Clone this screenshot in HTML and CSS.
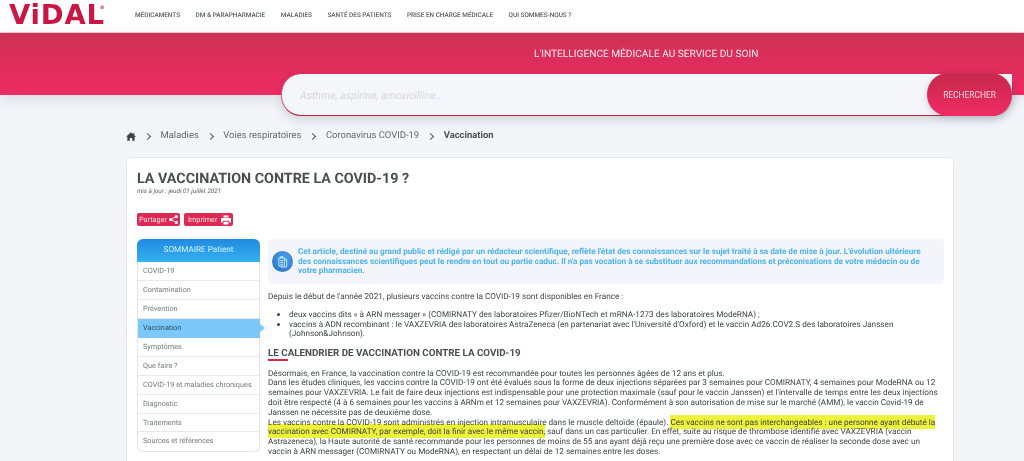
FILE: index.html
```html
<!DOCTYPE html>
<html lang="fr">
<head>
    <meta charset="UTF-8">
    <meta name="viewport" content="width=device-width, initial-scale=1.0">
    <title>La vaccination contre la COVID-19 ?</title>
    <link rel="stylesheet" href="styles.css">
</head>
<body>
    <header class="topbar">
        <a class="logo" href="#">ViDAL<sup>®</sup></a>
        <nav class="mainnav">
            <a href="#">MÉDICAMENTS</a>
            <a href="#">DM &amp; PARAPHARMACIE</a>
            <a href="#">MALADIES</a>
            <a href="#">SANTÉ DES PATIENTS</a>
            <a href="#">PRISE EN CHARGE MÉDICALE</a>
            <a href="#">QUI SOMMES-NOUS ?</a>
        </nav>
    </header>

    <section class="hero">
        <p class="tagline">L'INTELLIGENCE MÉDICALE AU SERVICE DU SOIN</p>
    </section>

    <form class="search">
        <span class="search-input">Asthme, aspirine, amoxicilline...</span>
        <button class="search-btn" type="button">RECHERCHER</button>
    </form>

    <nav class="crumbs">
        <svg class="home" viewBox="0 0 12 10" width="10" height="9"><path d="M6 0 0 5.200h1.600V10h3V6.800h2.800V10h3V5.200H12L10 3.500V.8H8.600v1.500z" fill="#3f4347"/></svg>
        <i class="sep"></i><a href="#">Maladies</a>
        <i class="sep"></i><a href="#">Voies respiratoires</a>
        <i class="sep"></i><a href="#">Coronavirus COVID-19</a>
        <i class="sep"></i><b>Vaccination</b>
    </nav>

    <main class="card">
        <h1>LA VACCINATION CONTRE LA COVID-19 ?</h1>
        <p class="updated">mis à jour : jeudi 01 juillet 2021</p>

        <div class="actions">
            <a class="action" href="#">Partager
                <svg viewBox="0 0 10 10" width="9" height="9"><circle cx="1.800" cy="5" r="1.700" fill="#fff"/><circle cx="8.200" cy="1.800" r="1.700" fill="#fff"/><circle cx="8.200" cy="8.200" r="1.700" fill="#fff"/><path d="M8.200 1.800 1.800 5l6.400 3.200" fill="none" stroke="#fff" stroke-width=".9"/></svg>
            </a>
            <a class="action print" href="#">Imprimer
                <svg viewBox="0 0 12 11" width="10" height="10"><path d="M3 0h6v2.500H3zM1 3h10a1 1 0 0 1 1 1v4.500H10V6.500H2v2H0V4a1 1 0 0 1 1-1zM3 7.500h6V11H3z" fill="#fff"/></svg>
            </a>
        </div>

        <div class="columns">
            <aside class="summary">
                <div class="summary-title">SOMMAIRE Patient</div>
                <ul>
                    <li>COVID-19</li>
                    <li>Contamination</li>
                    <li>Prévention</li>
                    <li class="active">Vaccination</li>
                    <li>Symptômes</li>
                    <li>Que faire ?</li>
                    <li>COVID-19 et maladies chroniques</li>
                    <li>Diagnostic</li>
                    <li>Traitements</li>
                    <li>Sources et références</li>
                </ul>
            </aside>

            <article class="content">
                <div class="notice">
                    <span class="notice-icon">
                        <svg viewBox="0 0 12 14" width="11" height="13" fill="none" stroke="#dcefff" stroke-width=".9"><path d="M2 3h6v9H2zM4 1.500h2V3H4zM8 5h2.500v8H4.500v-1M3.500 6h3M3.500 8h3M3.500 10h3"/></svg>
                    </span>
                    <p>Cet article, destiné au grand public et rédigé par un rédacteur scientifique, reflète l'état des connaissances sur le sujet traité à sa date de mise à jour. L'évolution ultérieure des connaissances scientifiques peut le rendre en tout ou partie caduc. Il n'a pas vocation à se substituer aux recommandations et préconisations de votre médecin ou de votre pharmacien.</p>
                </div>

                <p>Depuis le début de l'année 2021, plusieurs vaccins contre la COVID-19 sont disponibles en France :</p>
                <ul class="bullets">
                    <li>deux vaccins dits « à ARN messager » (COMIRNATY des laboratoires Pfizer/BioNTech et mRNA-1273 des laboratoires ModeRNA) ;</li>
                    <li>vaccins à ADN recombinant : le VAXZEVRIA des laboratoires AstraZeneca (en partenariat avec l'Université d'Oxford) et le vaccin Ad26.COV2.S des laboratoires Janssen (Johnson&amp;Johnson).</li>
                </ul>

                <h2>LE CALENDRIER DE VACCINATION CONTRE LA COVID-19</h2>

                <p>Désormais, en France, la vaccination contre la COVID-19 est recommandée pour toutes les personnes âgées de 12 ans et plus.<br>
                Dans les études cliniques, les vaccins contre la COVID-19 ont été évalués sous la forme de deux injections séparées par 3 semaines pour COMIRNATY, 4 semaines pour ModeRNA ou 12 semaines pour VAXZEVRIA. Le fait de faire deux injections est indispensable pour une protection maximale (sauf pour le vaccin Janssen) et l'intervalle de temps entre les deux injections doit être respecté (4 à 6 semaines pour les vaccins à ARNm et 12 semaines pour VAXZEVRIA). Conformément à son autorisation de mise sur le marché (AMM), le vaccin Covid-19 de Janssen ne nécessite pas de deuxième dose.<br>
                Les vaccins contre la COVID-19 sont administrés en injection intramusculaire dans le muscle deltoïde (épaule). <mark>Ces vaccins ne sont pas interchangeables : une personne ayant débuté la vaccination avec COMIRNATY, par exemple, doit la finir avec le même vaccin,</mark> sauf dans un cas particulier. En effet, suite au risque de thrombose identifié avec VAXZEVRIA (vaccin Astrazeneca), la Haute autorité de santé recommande pour les personnes de moins de 55 ans ayant déjà reçu une première dose avec ce vaccin de réaliser la seconde dose avec un vaccin à ARN messager (COMIRNATY ou ModeRNA), en respectant un délai de 12 semaines entre les doses.</p>
            </article>
        </div>
    </main>
</body>
</html>
```

FILE: styles.css
```css
* {
    box-sizing: border-box;
}

html, body {
    height: 461px;
    overflow: hidden;
}

body {
    margin: 0;
    font-family: Roboto, "Liberation Sans", sans-serif;
    font-size: 8.180px;
    line-height: 9.800px;
    text-rendering: geometricPrecision;
    color: #3c3f43;
    background: #f3f5f9;
}

a {
    color: inherit;
    text-decoration: none;
}

p {
    margin: 0;
}

/* top bar */
.topbar {
    display: flex;
    height: 33px;
    background: #fff;
    border-bottom: 1px solid #eccdd6;
}

.logo {
    width: 135px;
    padding: 4px 0 0 9px;
    font-family: "DejaVu Sans", sans-serif;
    font-size: 27.500px;
    line-height: 22px;
    font-weight: bold;
    letter-spacing: .800px;
    color: #cb1543;
}

.logo sup {
    margin-left: -5px;
    font-size: 5px;
    line-height: 6px;
    vertical-align: 15px;
    letter-spacing: 0;
}

.mainnav {
    display: flex;
    gap: 15.500px;
    padding-top: 11px;
    font-size: 6.420px;
    line-height: 8px;
    font-weight: 500;
    color: #55595d;
}

/* hero and search */
.hero {
    height: 62px;
    padding: 16px 0 0 534px;
    background: linear-gradient(to bottom, #cf3155, #ee2a62);
    box-shadow: 0 4px 14px rgba(60, 70, 90, .14);
}

.tagline {
    font-size: 10.150px;
    line-height: 11px;
    color: #fdeaf0;
}

.search {
    display: flex;
    align-items: stretch;
    justify-content: space-between;
    width: 731px;
    height: 42px;
    margin: -21px 0 0 281px;
    position: relative;
    background: #f4f6fa;
    border-bottom: 1px solid #c4203f;
    border-left: 1px solid #d2566f;
    border-radius: 20px 0 20px 20px;
    box-shadow: 0 5px 10px rgba(60, 70, 90, .16);
}

.search-input {
    padding: 16px 0 0 18px;
    font-size: 10.600px;
    line-height: 11px;
    font-style: italic;
    color: #d3d7e0;
}

.search-btn {
    width: 85px;
    height: 43px;
    margin-top: -1px;
    border: 0;
    border-radius: 21px;
    padding: 0;
    font-family: inherit;
    font-size: 8.400px;
    color: #fbd9e2;
    background: linear-gradient(to bottom, #c6284a, #f02a64);
    box-shadow: 0 2px 6px rgba(60, 70, 90, .25);
}

/* breadcrumb */
.crumbs {
    display: flex;
    align-items: center;
    height: 12px;
    margin: 14px 0 0 126px;
    font-size: 9.450px;
    color: #62666b;
}

.crumbs b {
    color: #4b4e52;
}

.sep {
    width: 5px;
    height: 5px;
    margin: 0 10.500px 0 9px;
    border-top: 1px solid #55595d;
    border-right: 1px solid #55595d;
    transform: rotate(45deg);
}

/* article card */
.card {
    width: 828px;
    height: 320px;
    margin: 15px 0 0 126px;
    padding: 14px 10px 0 10px;
    background: #fff;
    border: 1px solid #e4e6ea;
    border-radius: 5px;
}

h1 {
    margin: 0;
    font-size: 14.300px;
    line-height: 14px;
    font-weight: 700;
    color: #4a4d51;
}

.updated {
    margin-top: 1px;
    font-size: 6.300px;
    line-height: 8px;
    font-style: italic;
    color: #5b5e62;
}

.actions {
    display: flex;
    gap: 4px;
    margin-top: 18px;
}

.action {
    display: flex;
    align-items: center;
    gap: 2px;
    height: 13px;
    padding: 0 2px;
    font-size: 7.300px;
    color: #fbdfe6;
    background: #dd2a55;
    border-radius: 2px;
}

.action.print {
    gap: 4px;
    padding-left: 4px;
}

.columns {
    display: flex;
    margin-top: 13px;
}

/* summary column */
.summary {
    flex: none;
    width: 123px;
    height: 213px;
    background: #fff;
    border: 1px solid #e3e5e9;
    border-top: 0;
    border-radius: 6px;
}

.summary-title {
    height: 23px;
    margin: 0 -1px;
    font-size: 8.200px;
    line-height: 23px;
    text-align: center;
    color: #d8f0ff;
    background: linear-gradient(to bottom, #1f8ae2, #36b2f0);
    border-radius: 6px 6px 0 0;
}

.summary ul {
    margin: 0;
    padding: 0;
    list-style: none;
}

.summary li {
    height: 18.950px;
    padding-left: 5px;
    font-size: 7.300px;
    line-height: 18px;
    color: #75797d;
    border-bottom: 1px solid #e6e8eb;
}

.summary li:last-child {
    border-bottom: 0;
}

.summary li.active {
    position: relative;
    margin-right: -1px;
    color: #2f4a5c;
    background: #7cc8fb;
    border-bottom: 0;
}

.summary li.active::after {
    content: "";
    position: absolute;
    top: 5px;
    right: -5px;
    border-left: 5px solid #7cc8fb;
    border-top: 4.500px solid transparent;
    border-bottom: 4.500px solid transparent;
}

/* main text */
.content {
    flex: none;
    width: 676px;
    margin-left: 8px;
}

.notice {
    display: flex;
    align-items: center;
    height: 45px;
    padding: 0 15px 0 4px;
    margin-bottom: 8px;
    background: #f3f5fa;
    border-radius: 5px;
}

.notice p {
    font-size: 8.180px;
    line-height: 9.900px;
    font-weight: 700;
    color: #4bb3ee;
}

.notice-icon {
    display: flex;
    flex: none;
    align-items: center;
    justify-content: center;
    width: 21px;
    height: 21px;
    margin-right: 5px;
    background: radial-gradient(circle at 60% 35%, #4ba6ea, #2067c6);
    border-radius: 50%;
}

.bullets {
    margin: 8px 0 0;
    padding-left: 21px;
}

h2 {
    margin: 9px 0 7.500px;
    padding-bottom: 2px;
    position: relative;
    font-size: 9.800px;
    line-height: 11px;
    font-weight: 700;
    color: #4a4d51;
}

h2::after {
    content: "";
    position: absolute;
    left: 0;
    bottom: 0;
    width: 20px;
    height: 2px;
    background: #cf2a4e;
}

mark {
    color: inherit;
    background: #eef23a;
    padding: 2px 0;
    mix-blend-mode: multiply;
}
```
